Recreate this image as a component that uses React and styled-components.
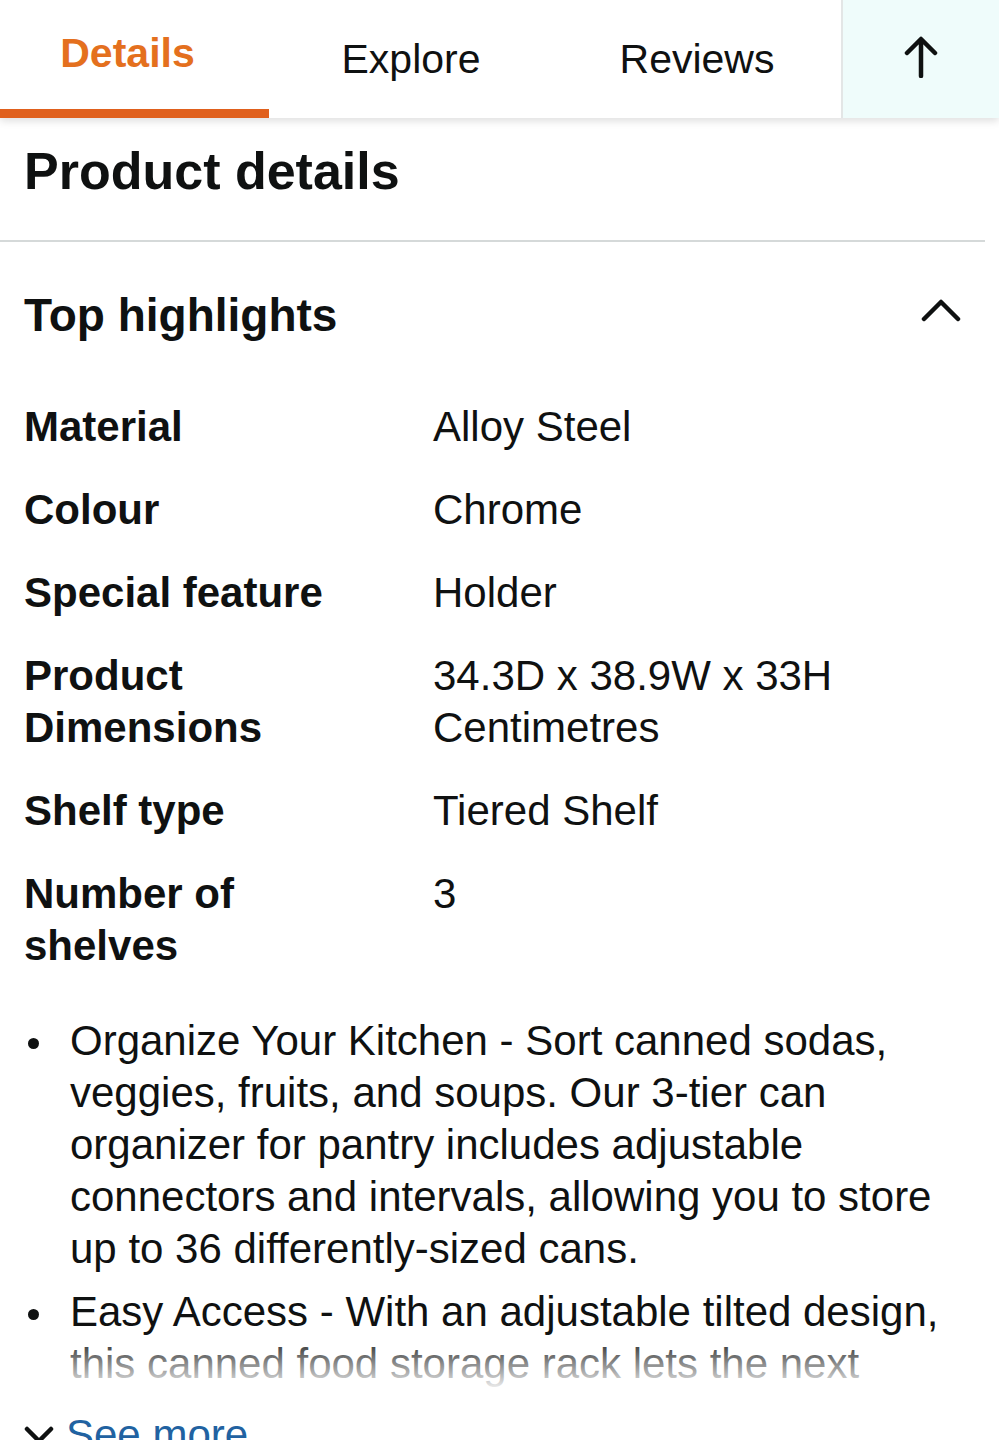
import React from 'react';
import styled, { createGlobalStyle } from 'styled-components';

const GlobalStyle = createGlobalStyle`
  html, body {
    margin: 0;
    padding: 0;
    background: #fff;
  }
  body {
    font-family: "Liberation Sans", Arial, sans-serif;
    color: #0f1111;
  }
`;

const Page = styled.div`
  width: 999px;
  height: 1440px;
  overflow: hidden;
  background: #fff;
`;

const TabBar = styled.div`
  display: flex;
  height: 118px;
  background: #fff;
  box-shadow: 0 3px 8px rgba(0, 0, 0, 0.13);
  position: relative;
  z-index: 1;
`;

const Tab = styled.div`
  box-sizing: border-box;
  width: ${p => p.w}px;
  height: 118px;
  padding-top: ${p => (p.active ? 29 : 35)}px;
  padding-right: ${p => (p.active ? 14 : 0)}px;
  text-align: center;
  font-size: 41px;
  line-height: 48px;
  font-weight: ${p => (p.active ? 700 : 400)};
  color: ${p => (p.active ? '#e4701e' : '#0f1111')};
  border-bottom: 9px solid ${p => (p.active ? '#e0601d' : 'transparent')};
`;

const TopButton = styled.div`
  flex: 1;
  display: flex;
  justify-content: center;
  padding-top: 36px;
  background: #effcfb;
  border-left: 2px solid #e3e6e6;
`;

const Section = styled.div`
  padding: 0 24px;
`;

const PageTitle = styled.h1`
  margin: 23px 0 39px;
  font-size: 52px;
  line-height: 60px;
  font-weight: 700;
`;

const Divider = styled.div`
  height: 2px;
  margin-right: 14px;
  background: #d5d9d9;
`;

const HighlightsHead = styled.div`
  display: flex;
  align-items: center;
  justify-content: space-between;
  margin-top: 47px;
  margin-bottom: 60px;
`;

const HighlightsTitle = styled.h2`
  margin: 0;
  font-size: 46px;
  line-height: 52px;
  font-weight: 700;
`;

const ChevronButton = styled.div`
  display: flex;
  margin-right: 14px;
  margin-bottom: 10px;
`;

const SpecTable = styled.div`
  display: grid;
  grid-template-columns: 409px 1fr;
  row-gap: 31px;
  font-size: 42px;
  line-height: 52px;
`;

const SpecLabel = styled.div`
  font-weight: 700;
  padding-right: 40px;
`;

const SpecValue = styled.div`
  font-weight: 400;
`;

const BulletClip = styled.div`
  position: relative;
  margin-top: 43px;
  height: 388px;
  overflow: hidden;
`;

const BulletList = styled.ul`
  margin: 0;
  padding: 0;
  list-style: none;
`;

const Bullet = styled.li`
  display: flex;
  font-size: 42px;
  line-height: 52px;
  & + & {
    margin-top: 11px;
  }
`;

const Dot = styled.span`
  flex: 0 0 46px;
  display: flex;
  align-items: flex-start;
  padding-top: 23px;
  box-sizing: border-box;
  &::before {
    content: '';
    display: block;
    width: 11px;
    height: 11px;
    margin-left: 4px;
    border-radius: 50%;
    background: #0f1111;
  }
`;

const BulletText = styled.span`
  flex: 1;
  padding-right: 30px;
`;

const Fade = styled.div`
  position: absolute;
  left: 0;
  right: 0;
  bottom: 0;
  height: 70px;
  background: linear-gradient(rgba(255, 255, 255, 0), #fff 85%);
`;

const SeeMore = styled.div`
  display: flex;
  align-items: center;
  gap: 12px;
  margin-top: 6px;
  font-size: 42px;
  line-height: 52px;
  color: #2162a1;
`;

const ArrowUp = () => (
  <svg width="36" height="42" viewBox="0 0 36 42" fill="none">
    <path d="M18 40V4M4 17L18 3l14 14" stroke="#0f1111" strokeWidth="4.5" strokeLinecap="round" strokeLinejoin="round" />
  </svg>
);

const ChevronUp = () => (
  <svg width="40" height="26" viewBox="0 0 40 26" fill="none">
    <path d="M3 22L20 5l17 17" stroke="#0f1111" strokeWidth="4.5" strokeLinecap="round" strokeLinejoin="round" />
  </svg>
);

const ChevronDown = () => (
  <svg width="30" height="20" viewBox="0 0 30 20" fill="none">
    <path d="M3 4l12 12L27 4" stroke="#0f1111" strokeWidth="4.5" strokeLinecap="round" strokeLinejoin="round" />
  </svg>
);

const specs = [
  ['Material', 'Alloy Steel'],
  ['Colour', 'Chrome'],
  ['Special feature', 'Holder'],
  ['Product Dimensions', '34.3D x 38.9W x 33H Centimetres'],
  ['Shelf type', 'Tiered Shelf'],
  ['Number of shelves', '3'],
];

const bullets = [
  'Organize Your Kitchen - Sort canned sodas, veggies, fruits, and soups. Our 3-tier can organizer for pantry includes adjustable connectors and intervals, allowing you to store up to 36 differently-sized cans.',
  'Easy Access - With an adjustable tilted design, this canned food storage rack lets the next shelf come forward when you take a can out, so you can always see what you have at a glance.',
];

export default function App() {
  return (
    <Page>
      <GlobalStyle />
      <TabBar>
        <Tab w={269} active>Details</Tab>
        <Tab w={284}>Explore</Tab>
        <Tab w={288}>Reviews</Tab>
        <TopButton>
          <ArrowUp />
        </TopButton>
      </TabBar>

      <Section>
        <PageTitle>Product details</PageTitle>
      </Section>
      <Divider />

      <Section>
        <HighlightsHead>
          <HighlightsTitle>Top highlights</HighlightsTitle>
          <ChevronButton>
            <ChevronUp />
          </ChevronButton>
        </HighlightsHead>

        <SpecTable>
          {specs.map(([label, value]) => (
            <React.Fragment key={label}>
              <SpecLabel>{label}</SpecLabel>
              <SpecValue>{value}</SpecValue>
            </React.Fragment>
          ))}
        </SpecTable>

        <BulletClip>
          <BulletList>
            {bullets.map(b => (
              <Bullet key={b}>
                <Dot />
                <BulletText>{b}</BulletText>
              </Bullet>
            ))}
          </BulletList>
          <Fade />
        </BulletClip>

        <SeeMore>
          <ChevronDown />
          <span>See more</span>
        </SeeMore>
      </Section>
    </Page>
  );
}
